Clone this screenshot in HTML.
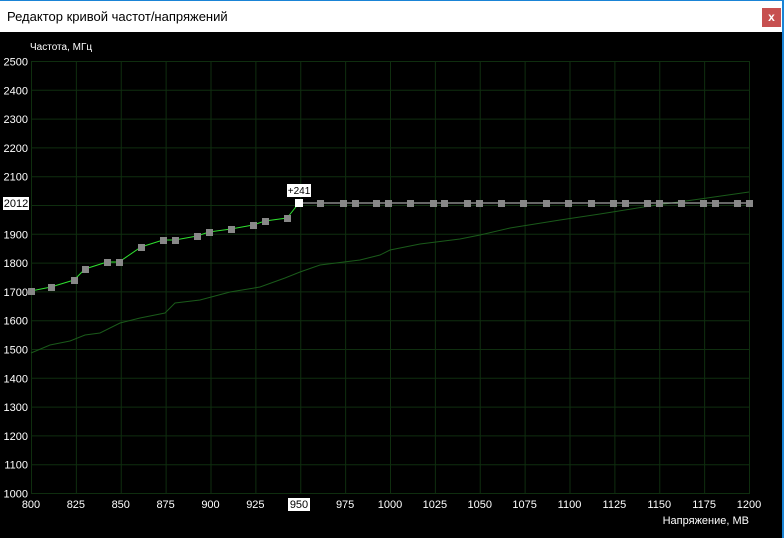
<!DOCTYPE html><html><head><meta charset="utf-8"><style>
body{margin:0;width:784px;height:538px;overflow:hidden;background:#000;font-family:"Liberation Sans",sans-serif}
.t{position:absolute;left:0;top:0;width:782px;height:31px;background:#fff;border-top:1px solid #1a84d6}
.rb{position:absolute;left:782px;top:0;width:2px;height:538px;background:#1a84d6}
</style></head><body>
<div class="t"><div style="position:absolute;left:7px;top:8px;font-size:13px;color:#000">Редактор кривой частот/напряжений</div>
<div style="position:absolute;left:762px;top:7px;width:19px;height:19px;background:#c75050;color:#fff;font-size:12px;font-weight:bold;text-align:center;line-height:18px">x</div></div>
<div class="rb"></div>
<svg width="784" height="538" style="position:absolute;left:0;top:0" font-family="Liberation Sans" font-size="11">
<g stroke="#0f2e0f" stroke-width="1" fill="none">
<rect x="31.5" y="61.5" width="718" height="432"/>
</g>
<g id="grid" stroke="#0f2e0f"></g>
<text x="30" y="50" fill="#fff" font-size="10">Частота, МГц</text>
<g id="yl" fill="#fff" text-anchor="end"></g>
<g id="xl" fill="#fff" text-anchor="middle"></g>
<text x="749" y="524" fill="#fff" text-anchor="end" font-size="11">Напряжение, МВ</text>
<polyline fill="none" stroke="#1a5a1a" stroke-width="1" points="31,353 50,345 70,341 85,335 100,333 120,323 140,318 165,313 175,303 200,300 230,292 260,287 285,278 300,272 320,265 360,260 380,255 390,250 420,244 460,239 480,235 510,228 560,220 600,214 650,206 700,199 749,192"/>
<polyline fill="none" stroke="#2fe02f" stroke-width="1" points="31,291 51,287 74,280 85,269 107,262 119,262 141,247 163,240 175,240 197,236 209,232 231,229 253,225 265,221 287,218 299,203"/>
<line x1="299" y1="203" x2="749" y2="203" stroke="#ccc"/>
<g id="pts" fill="#888"></g>
<rect x="295" y="199" width="8" height="8" fill="#fff"/>
<rect x="287" y="184" width="24" height="13" fill="#fff"/><text x="299" y="194" text-anchor="middle" fill="#000" font-size="10">+241</text>
<rect x="3" y="197" width="26" height="13" fill="#fff"/><text x="16" y="207" text-anchor="middle" fill="#000" font-size="11">2012</text>
<rect x="288" y="498" width="22" height="13" fill="#fff"/><text x="299" y="508" text-anchor="middle" fill="#000" font-size="11">950</text>
</svg>
<script>
var ns="http://www.w3.org/2000/svg";
function el(p,t,a,tx){var e=document.createElementNS(ns,t);for(var k in a)e.setAttribute(k,a[k]);if(tx)e.textContent=tx;document.getElementById(p).appendChild(e);}
for(var i=0;i<=16;i++){var x=31.5+i*44.875;el("grid","line",{x1:x,x2:x,y1:61,y2:493});if(i!=6)el("xl","text",{x:31+i*44.875,y:508},""+(800+25*i));}
for(var j=0;j<=15;j++){var y=61.5+j*28.8;el("grid","line",{x1:31,x2:749,y1:y,y2:y});if(j!=5)el("yl","text",{x:28,y:y+4},""+(2500-100*j));}
var P=[[31,291],[51,287],[74,280],[85,269],[107,262],[119,262],[141,247],[163,240],[175,240],[197,236],[209,232],[231,229],[253,225],[265,221],[287,218]];
[320,343,355,376,388,410,433,444,467,479,501,523,546,568,591,613,625,647,659,681,703,715,737,749].forEach(function(x){P.push([x,203])});
P.forEach(function(p){el("pts","rect",{x:p[0]-3,y:p[1]-3,width:7,height:7})});
</script>
</body></html>
